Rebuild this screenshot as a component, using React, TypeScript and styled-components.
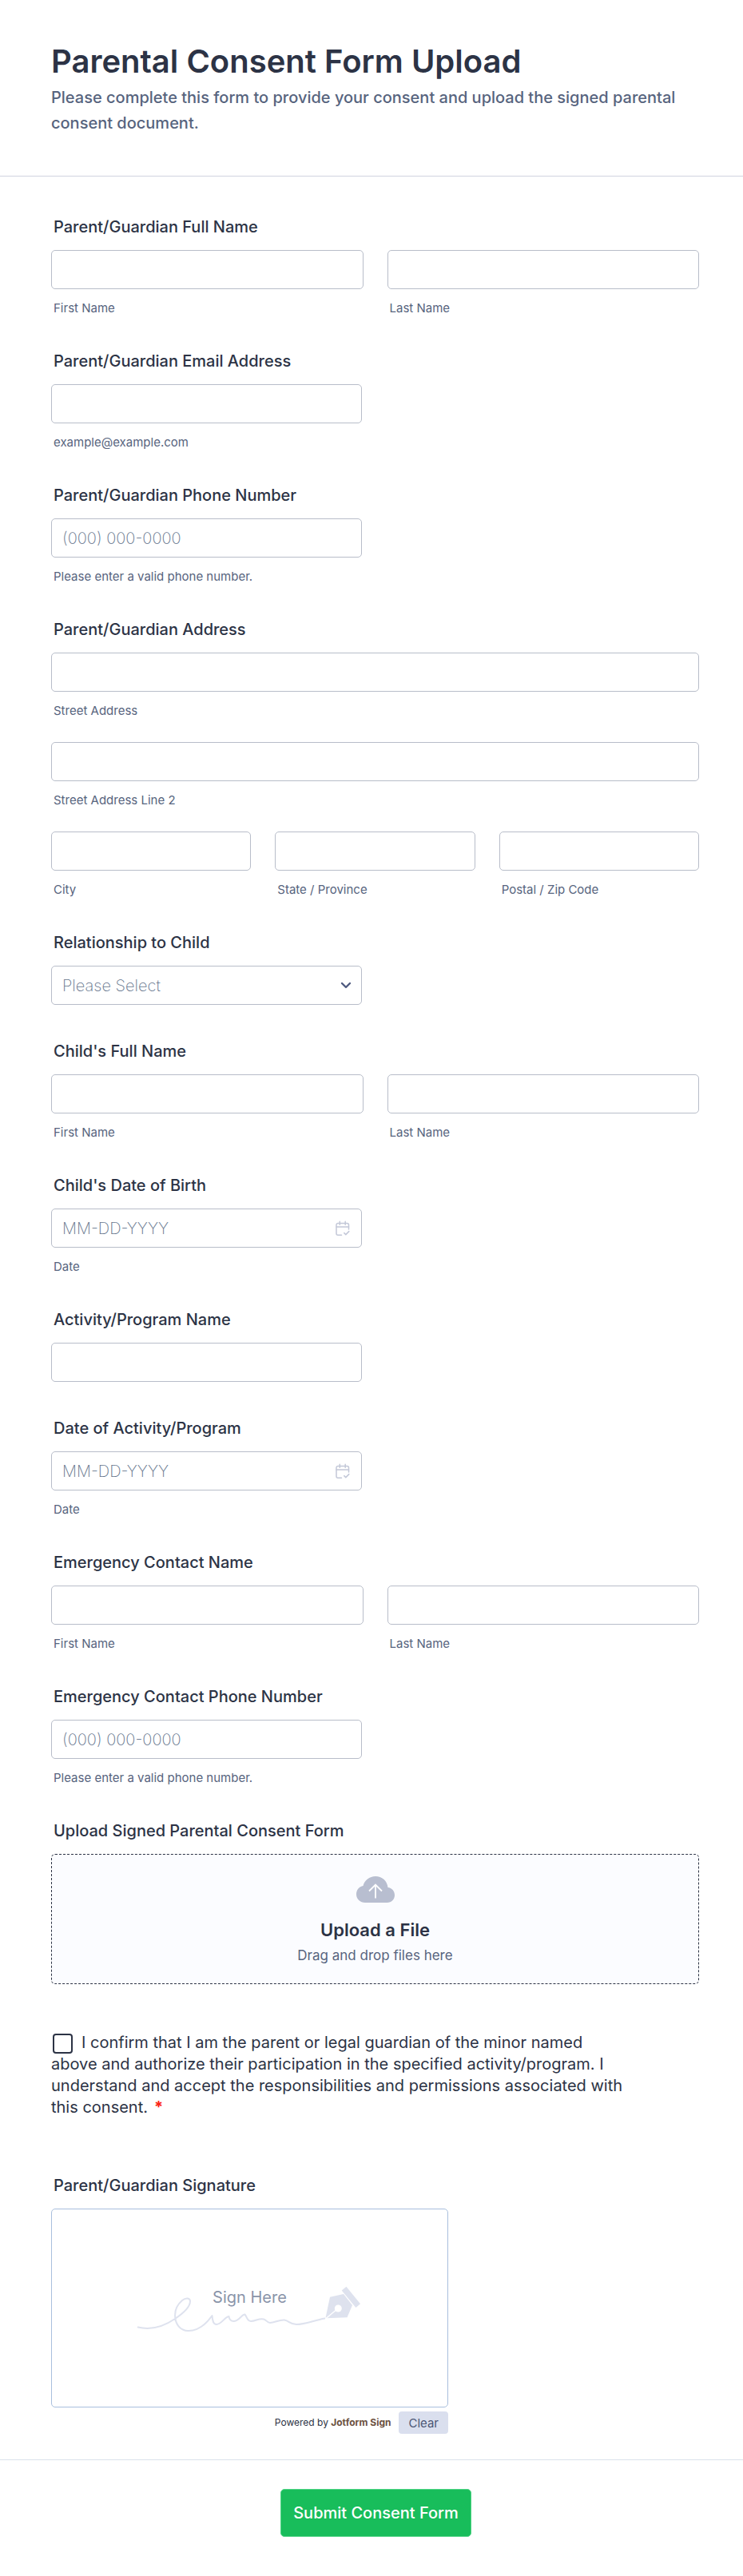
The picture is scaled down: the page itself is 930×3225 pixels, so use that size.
import React, { useState } from 'react';
import styled, { createGlobalStyle } from 'styled-components';

const ink = '#2c3345';
const muted = '#57647e';
const line = '#b8bdc9';

const GlobalStyle = createGlobalStyle`
  *, *::before, *::after { box-sizing: border-box; }
  body {
    margin: 0;
    background: #fff;
    color: ${ink};
    font-family: Inter, "Liberation Sans", sans-serif;
  }
  input, select, button { font-family: inherit; }
`;

const Page = styled.form`
  background: #fff;
`;

const Header = styled.header`
  padding: 52px 64px 50px;
  border-bottom: 1px solid #d1d3e0;
`;

const Title = styled.h1`
  margin: 0;
  font-size: 40px;
  line-height: 50px;
  font-weight: 600;
`;

const Subtitle = styled.p`
  margin: 4px 0 0;
  font-size: 20px;
  line-height: 32px;
  font-weight: 500;
  color: ${muted};
`;

const Body = styled.main`
  padding: 51px 55px 32px 64px;
`;

const Question = styled.fieldset<{ $last?: boolean }>`
  margin: 0 0 ${(p) => (p.$last ? 0 : 44)}px;
  padding: 0;
  border: 0;
  min-width: 0;
`;

const Heading = styled.legend`
  display: block;
  margin: 0 0 17px;
  padding: 0 3px;
  font-size: 20px;
  line-height: 24px;
  font-weight: 500;
`;

const Rows = styled.div`
  display: grid;
  gap: 29px;
`;

const Columns = styled.div<{ $count: number }>`
  display: grid;
  grid-template-columns: repeat(${(p) => p.$count}, minmax(0, 1fr));
  gap: 30px;
`;

const Half = styled.div`
  width: 48%;
`;

const FieldBox = styled.div`
  display: grid;
  grid-template-columns: minmax(0, 1fr) auto;
  align-items: center;
  height: 49px;
  border: 1px solid ${line};
  border-radius: 5px;
  background: #fff;
  &:focus-within { border-color: #4277ff; }
`;

const TextInput = styled.input`
  grid-area: 1 / 1;
  width: 100%;
  height: 47px;
  padding: 0 13px;
  border: 0;
  border-radius: 5px;
  outline: 0;
  background: transparent;
  color: ${ink};
  font-size: 20px;
  font-weight: 200;
  &::placeholder { color: #64748c; opacity: 1; }
`;

const Select = styled.select`
  grid-area: 1 / 1 / 2 / 3;
  width: 100%;
  height: 47px;
  padding: 0 40px 0 13px;
  border: 0;
  border-radius: 5px;
  outline: 0;
  appearance: none;
  background: transparent;
  color: #64748c;
  font-size: 20px;
  font-weight: 200;
`;

const Chevron = styled.svg`
  grid-area: 1 / 2;
  margin-right: 12px;
  pointer-events: none;
`;

const IconButton = styled.button`
  display: flex;
  margin: 0 13px 0 0;
  padding: 0;
  border: 0;
  background: none;
  cursor: pointer;
`;

const SubLabel = styled.label`
  display: block;
  margin-top: 14px;
  padding: 0 3px;
  font-size: 15px;
  line-height: 20px;
  color: ${muted};
`;

const NoHint = styled.div`
  height: 2px;
`;

const DropZone = styled.label`
  display: flex;
  flex-direction: column;
  align-items: center;
  padding: 27px 0 23px;
  border: 1px dashed ${ink};
  border-radius: 5px;
  background: #fbfcff;
  cursor: pointer;
`;

const HiddenFile = styled.input`
  position: absolute;
  width: 1px;
  height: 1px;
  opacity: 0;
`;

const DropTitle = styled.span`
  margin-top: 20px;
  font-size: 22px;
  line-height: 28px;
  font-weight: 600;
`;

const DropHint = styled.span`
  margin-top: 6px;
  font-size: 17px;
  line-height: 24px;
  color: ${muted};
`;

const Consent = styled.div`
  max-width: 720px;
  margin: 60px 0 72px;
  font-size: 20px;
  line-height: 27px;
`;

const Checkbox = styled.input`
  appearance: none;
  width: 25px;
  height: 25px;
  margin: 0 11px 0 2px;
  border: 2px solid ${ink};
  border-radius: 4px;
  background: #fff;
  vertical-align: middle;
  &:checked { background: ${ink}; }
`;

const Required = styled.span`
  margin-left: 8px;
  color: #fb2316;
  font-weight: 700;
`;

const Signature = styled.div`
  width: 497px;
  max-width: 100%;
`;

const SignPad = styled.div`
  display: grid;
  place-items: center;
  height: 249px;
  border: 1px solid #a9bfdd;
  border-radius: 5px;
`;

const Scribble = styled.svg`
  grid-area: 1 / 1;
`;

const SignHere = styled.span`
  grid-area: 1 / 1;
  padding-bottom: 28px;
  font-size: 20px;
  line-height: 24px;
  color: #8a94a9;
`;

const SignFooter = styled.div`
  display: flex;
  justify-content: flex-end;
  align-items: center;
  gap: 10px;
  margin-top: 5px;
  font-size: 12px;
  line-height: 16px;
`;

const SignBrand = styled.strong`
  font-weight: 700;
  color: #6b5140;
`;

const ClearButton = styled.button`
  height: 28px;
  padding: 0 12px;
  border: 0;
  border-radius: 4px;
  background: #dadfee;
  color: #4c5675;
  font-size: 15px;
`;

const Footer = styled.footer`
  display: flex;
  justify-content: center;
  padding: 36px 44px 51px 55px;
  border-top: 1px solid #dbe2ec;
`;

const SubmitButton = styled.button`
  height: 60px;
  padding: 0 15px;
  border: 1px solid #4fd384;
  border-radius: 5px;
  background: #18bd5b;
  color: #fff;
  font-size: 20px;
  font-weight: 500;
`;

type FieldProps = { id: string; hint?: string; name?: string; placeholder?: string; type?: string };

function Field({ id, hint, name, placeholder, type = 'text' }: FieldProps) {
  return (
    <div>
      <FieldBox>
        <TextInput id={id} type={type} placeholder={placeholder} aria-label={name} />
      </FieldBox>
      {hint ? <SubLabel htmlFor={id}>{hint}</SubLabel> : <NoHint />}
    </div>
  );
}

function DateField({ id }: { id: string }) {
  return (
    <Half>
      <FieldBox>
        <TextInput id={id} type="text" placeholder="MM-DD-YYYY" />
        <IconButton type="button" aria-label="Choose date">
          <svg width="20" height="20" viewBox="0 0 20 20" fill="none" stroke="#c3c8d8" strokeWidth="1.5" strokeLinecap="round" strokeLinejoin="round">
            <path d="M8.5 18.2H4a2 2 0 0 1-2-2V5.4a2 2 0 0 1 2-2h11.5a2 2 0 0 1 2 2V11" />
            <path d="M2 8h15.500M6.300 1.200v4M13.200 1.200v4" />
            <path d="M11.800 15.600l2 2 4-4" />
          </svg>
        </IconButton>
      </FieldBox>
      <SubLabel htmlFor={id}>Date</SubLabel>
    </Half>
  );
}

function NameQuestion({ title, id }: { title: string; id: string }) {
  return (
    <Question>
      <Heading>{title}</Heading>
      <Columns $count={2}>
        <Field id={`${id}-first`} hint="First Name" />
        <Field id={`${id}-last`} hint="Last Name" />
      </Columns>
    </Question>
  );
}

function HalfQuestion({ title, ...field }: FieldProps & { title: string }) {
  return (
    <Question>
      <Heading>{title}</Heading>
      <Half>
        <Field {...field} name={field.hint ? undefined : title} />
      </Half>
    </Question>
  );
}

export default function App() {
  const [agreed, setAgreed] = useState(false);
  return (
    <Page onSubmit={(e: React.FormEvent) => e.preventDefault()}>
      <GlobalStyle />
      <Header>
        <Title>Parental Consent Form Upload</Title>
        <Subtitle>Please complete this form to provide your consent and upload the signed parental consent document.</Subtitle>
      </Header>
      <Body>
        <NameQuestion title="Parent/Guardian Full Name" id="guardian" />
        <HalfQuestion title="Parent/Guardian Email Address" id="email" type="email" hint="example@example.com" />
        <HalfQuestion title="Parent/Guardian Phone Number" id="phone" type="tel" placeholder="(000) 000-0000" hint="Please enter a valid phone number." />
        <Question>
          <Heading>Parent/Guardian Address</Heading>
          <Rows>
            <Field id="street" hint="Street Address" />
            <Field id="street2" hint="Street Address Line 2" />
            <Columns $count={3}>
              <Field id="city" hint="City" />
              <Field id="state" hint="State / Province" />
              <Field id="postal" hint="Postal / Zip Code" />
            </Columns>
          </Rows>
        </Question>
        <Question>
          <Heading>Relationship to Child</Heading>
          <Half>
            <FieldBox>
              <Select aria-label="Relationship to Child" defaultValue="">
                <option value="">Please Select</option>
                <option>Mother</option>
                <option>Father</option>
                <option>Guardian</option>
              </Select>
              <Chevron width="14" height="10" viewBox="0 0 14 10" fill="none" stroke="#4f5b80" strokeWidth="2.4" strokeLinecap="round" strokeLinejoin="round" aria-hidden="true">
                <path d="M2 2l5 5 5-5" />
              </Chevron>
            </FieldBox>
            <NoHint />
          </Half>
        </Question>
        <NameQuestion title="Child's Full Name" id="child" />
        <Question>
          <Heading>Child's Date of Birth</Heading>
          <DateField id="birth" />
        </Question>
        <HalfQuestion title="Activity/Program Name" id="activity" />
        <Question>
          <Heading>Date of Activity/Program</Heading>
          <DateField id="activity-date" />
        </Question>
        <NameQuestion title="Emergency Contact Name" id="emergency" />
        <HalfQuestion title="Emergency Contact Phone Number" id="emergency-phone" type="tel" placeholder="(000) 000-0000" hint="Please enter a valid phone number." />
        <Question $last>
          <Heading>Upload Signed Parental Consent Form</Heading>
          <DropZone>
            <HiddenFile type="file" />
            <svg width="48" height="33" viewBox="0 0 48 33" aria-hidden="true">
              <path fill="#b8bed0" d="M11 33C5 33 0 28.500 0 22.500 0 17 3.500 13 8.500 12 10 5 16.500 0 24 0c8 0 14.500 5.500 15.500 14C44.500 14.500 48 18.500 48 23.500 48 29 44 33 38.500 33z" />
              <path d="M24 27.500V11M16 18.500l8-8 8 8" fill="none" stroke="#fff" strokeWidth="1.8" />
            </svg>
            <DropTitle>Upload a File</DropTitle>
            <DropHint>Drag and drop files here</DropHint>
          </DropZone>
        </Question>
        <Consent>
          <Checkbox id="agree" type="checkbox" required checked={agreed} onChange={(e) => setAgreed(e.target.checked)} />
          <label htmlFor="agree">
            I confirm that I am the parent or legal guardian of the minor named above and authorize their participation in the specified activity/program. I understand and accept the responsibilities and permissions associated with this consent.
          </label>
          <Required>*</Required>
        </Consent>
        <Question $last>
          <Heading>Parent/Guardian Signature</Heading>
          <Signature>
            <SignPad>
              <Scribble width="304" height="100" viewBox="0 0 304 100" aria-hidden="true">
                <path
                  fill="none"
                  stroke="#dee2ee"
                  strokeWidth="2"
                  strokeLinecap="round"
                  strokeLinejoin="round"
                  d="M11.700 73.500C26 77 42 74 58 63 70 55 77 47 77 41 77 37 72 36 67 40 60 46 57 54 58.500 63 60 72 66 77.500 74 78 85 78.500 96 71 104.500 59 105 66 106 70 110 70 116 70 120 61 125.500 60 126 64 128 66 131.500 66 138 66 141 58 145.500 57.500 148 60 148 66 153 66 159 66 163 62 169 63.500 173 64.500 173 68 177 68 183 68 188 64 195 64.500 201 65.500 202 70 210 70 220 70 232 65 245.500 62.500"
                />
                <path fill="#dee2ee" d="M252 35.700L269 32l11 14-6.500 15.200-26.500 1L246.700 61z" />
                <path fill="#dee2ee" d="M266.700 27.500l5.800-4.800L290 44.200l-5.600 4.800z" />
                <circle cx="262.300" cy="50" r="4.500" fill="#fff" />
                <path d="M262 50L246.500 63" stroke="#fff" strokeWidth="1.400" />
              </Scribble>
              <SignHere>Sign Here</SignHere>
            </SignPad>
            <SignFooter>
              <span>Powered by <SignBrand>Jotform Sign</SignBrand></span>
              <ClearButton type="button">Clear</ClearButton>
            </SignFooter>
          </Signature>
        </Question>
      </Body>
      <Footer>
        <SubmitButton type="submit">Submit Consent Form</SubmitButton>
      </Footer>
    </Page>
  );
}
